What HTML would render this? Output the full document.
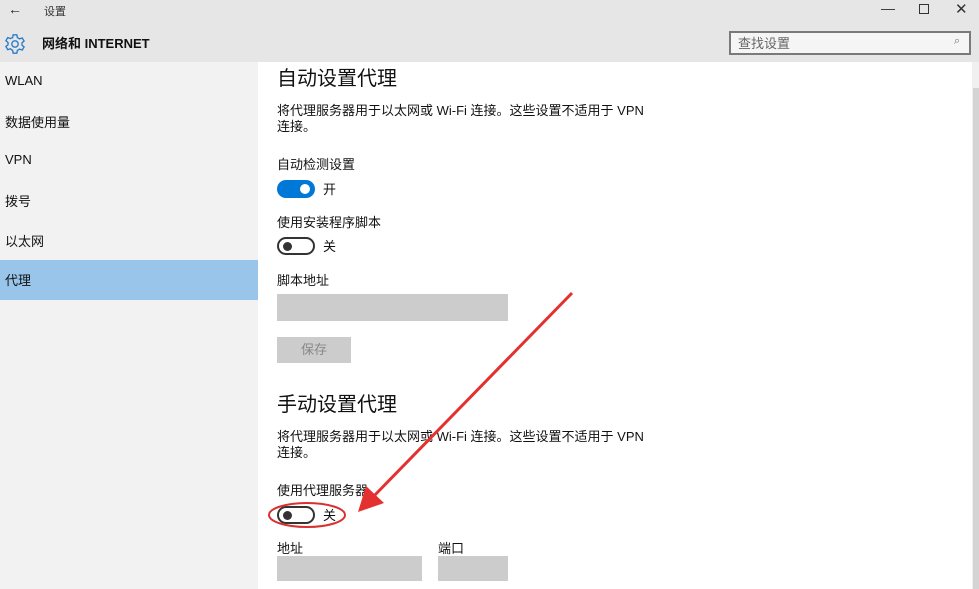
<!DOCTYPE html>
<html><head><meta charset="utf-8"><style>
*{margin:0;padding:0;box-sizing:border-box}
body{width:979px;height:589px;overflow:hidden;position:relative;background:#fff;font-family:"Liberation Sans","Noto Sans CJK SC",sans-serif;color:#000}
.a{position:absolute}
.hdr{left:0;top:0;width:979px;height:62px;background:#e6e6e6}
.side{left:0;top:62px;width:258px;height:527px;background:#f2f2f2}
.it{left:5px;font-size:13px;color:#111}
.t{font-size:13px;color:#111}
.h{font-size:20px;color:#111}
.tg{width:38px;height:18px;border-radius:9px}
.box{background:#cccccc}
</style></head><body>
<div class="a hdr"></div>
<div class="a" style="left:8px;top:1px;font-size:14px;color:#222">←</div>
<div class="a" style="left:44px;top:3px;font-size:11px;color:#333">设置</div>
<div class="a" style="left:881px;top:0;font-size:14px;color:#333">—</div>
<div class="a" style="left:919px;top:4px;width:10px;height:10px;border:1px solid #333"></div>
<div class="a" style="left:955px;top:0;font-size:15px;color:#333">✕</div>
<svg class="a" style="left:4px;top:33px" width="22" height="22" viewBox="0 0 24 24" fill="none" stroke="#2d7cc6" stroke-width="1.5"><circle cx="12" cy="12" r="3.5"/><path d="M10 2h4l.6 3 2.4 1.4 2.9-1 2 3.4-2.3 2v2.4l2.3 2-2 3.4-2.9-1-2.4 1.4-.6 3h-4l-.6-3L7 17.2l-2.9 1-2-3.4 2.3-2v-2.4l-2.3-2 2-3.4 2.9 1L9.4 5z"/></svg>
<div class="a" style="left:42px;top:33px;font-size:13px;font-weight:bold;color:#111">网络和 INTERNET</div>
<div class="a" style="left:729px;top:31px;width:242px;height:24px;border:2px solid #7a7a7a;background:#f5f5f5"></div>
<div class="a" style="left:738px;top:33px;font-size:13px;color:#666">查找设置</div>
<div class="a" style="left:954px;top:35px;font-size:11px;color:#777">⌕</div>
<div class="a side"></div>
<div class="a" style="left:0;top:260px;width:258px;height:40px;background:#99c5ea"></div>
<div class="a it" style="top:73px">WLAN</div>
<div class="a it" style="top:112px">数据使用量</div>
<div class="a it" style="top:152px">VPN</div>
<div class="a it" style="top:191px">拨号</div>
<div class="a it" style="top:231px">以太网</div>
<div class="a it" style="top:270px">代理</div>
<div class="a" style="left:972px;top:62px;width:7px;height:527px;background:#f0f0f0"></div>
<div class="a" style="left:973px;top:88px;width:6px;height:501px;background:#d4d4d4"></div>
<div class="a h" style="left:277px;top:62px">自动设置代理</div>
<div class="a t" style="left:277px;top:103px;width:380px;line-height:16px">将代理服务器用于以太网或 Wi-Fi 连接。这些设置不适用于 VPN 连接。</div>
<div class="a t" style="left:277px;top:154px">自动检测设置</div>
<div class="a tg" style="left:277px;top:180px;background:#0078d7"><div class="a" style="left:23px;top:4px;width:10px;height:10px;border-radius:5px;background:#fff"></div></div>
<div class="a t" style="left:323px;top:179px">开</div>
<div class="a t" style="left:277px;top:212px">使用安装程序脚本</div>
<div class="a tg" style="left:277px;top:237px;border:2px solid #333"><div class="a" style="left:4px;top:3px;width:9px;height:9px;border-radius:5px;background:#333"></div></div>
<div class="a t" style="left:323px;top:236px">关</div>
<div class="a t" style="left:277px;top:270px">脚本地址</div>
<div class="a box" style="left:277px;top:294px;width:231px;height:27px"></div>
<div class="a box" style="left:277px;top:337px;width:74px;height:26px;color:#888;font-size:13px;text-align:center;line-height:26px">保存</div>
<div class="a h" style="left:277px;top:388px">手动设置代理</div>
<div class="a t" style="left:277px;top:429px;width:380px;line-height:16px">将代理服务器用于以太网或 Wi-Fi 连接。这些设置不适用于 VPN 连接。</div>
<div class="a t" style="left:277px;top:480px">使用代理服务器</div>
<div class="a tg" style="left:277px;top:506px;border:2px solid #333"><div class="a" style="left:4px;top:3px;width:9px;height:9px;border-radius:5px;background:#333"></div></div>
<div class="a t" style="left:323px;top:505px">关</div>
<div class="a t" style="left:277px;top:538px">地址</div>
<div class="a t" style="left:438px;top:538px">端口</div>
<div class="a box" style="left:277px;top:556px;width:145px;height:25px"></div>
<div class="a box" style="left:438px;top:556px;width:70px;height:25px"></div>
<svg class="a" style="left:0;top:0" width="979" height="589"><ellipse cx="307" cy="515" rx="38" ry="12" fill="none" stroke="#d93030" stroke-width="2"/><line x1="572" y1="293" x2="372" y2="498" stroke="#e53030" stroke-width="3"/><polygon points="358,512 366,486 384,503" fill="#e53030"/></svg>
</body></html>
